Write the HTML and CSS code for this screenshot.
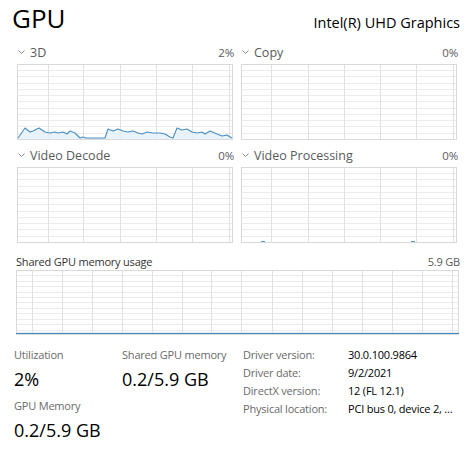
FILE: index.html
```html
<!DOCTYPE html>
<html lang="en">
<head>
<meta charset="utf-8">
<title>GPU</title>
<link rel="stylesheet" href="styles.css">
</head>
<body>
<div class="page">
  <header class="top">
    <h1 class="title">GPU</h1>
    <div class="model">Intel(R) UHD Graphics</div>
  </header>

  <div class="engines">
    <section class="engine">
      <div class="ehead">
        <span class="ename"><svg class="chev" viewBox="0 0 7 5"><polyline points="0.5,0.5 3.5,3.5 6.5,0.5"/></svg>3D</span>
        <span class="epct">2%</span>
      </div>
      <svg class="graph" viewBox="0 0 216 76" shape-rendering="crispEdges">
        <path class="hgrid" d="M1 6.5H215M1 12.5H215M1 19.5H215M1 25.5H215M1 31.5H215M1 37.5H215M1 44.5H215M1 50.5H215M1 56.5H215M1 62.5H215M1 69.5H215"/>
        <path class="vgrid" d="M31.5 1V75M66.5 1V75M103.5 1V75M139.5 1V75M175.5 1V75M212.5 1V75"/>
        <rect class="frame" x="0.5" y="0.5" width="215" height="75"/>
        <polygon class="area" shape-rendering="auto" points="1,74 8,64 13,68 16,67 22,64 28,68 33,69 38,68 41,69 46,68 50,70 53,67 58,69 61,72 63,74 66,73 69,74 88,74 91,65 96,67 101,65 106,67 111,68 116,67 121,69 125,70 130,68 136,69 143,69 148,70 153,73 156,74 160,64 165,66 170,65 175,68 180,69 185,68 188,70 193,67 200,70 205,72 210,71 213,73 215,74 215,75 1,75"/>
        <polyline class="line" shape-rendering="auto" points="1,74 8,64 13,68 16,67 22,64 28,68 33,69 38,68 41,69 46,68 50,70 53,67 58,69 61,72 63,74 66,73 69,74 88,74 91,65 96,67 101,65 106,67 111,68 116,67 121,69 125,70 130,68 136,69 143,69 148,70 153,73 156,74 160,64 165,66 170,65 175,68 180,69 185,68 188,70 193,67 200,70 205,72 210,71 213,73 215,74"/>
      </svg>
    </section>

    <section class="engine">
      <div class="ehead">
        <span class="ename"><svg class="chev" viewBox="0 0 7 5"><polyline points="0.5,0.5 3.5,3.5 6.5,0.5"/></svg>Copy</span>
        <span class="epct">0%</span>
      </div>
      <svg class="graph" viewBox="0 0 216 76" shape-rendering="crispEdges">
        <path class="hgrid" d="M1 6.5H215M1 12.5H215M1 19.5H215M1 25.5H215M1 31.5H215M1 37.5H215M1 44.5H215M1 50.5H215M1 56.5H215M1 62.5H215M1 69.5H215"/>
        <path class="vgrid" d="M30.5 1V75M67.5 1V75M103.5 1V75M139.5 1V75M175.5 1V75M212.5 1V75"/>
        <rect class="frame" x="0.5" y="0.5" width="215" height="75"/>
      </svg>
    </section>

    <section class="engine">
      <div class="ehead">
        <span class="ename"><svg class="chev" viewBox="0 0 7 5"><polyline points="0.5,0.5 3.5,3.5 6.5,0.5"/></svg>Video Decode</span>
        <span class="epct">0%</span>
      </div>
      <svg class="graph" viewBox="0 0 216 76" shape-rendering="crispEdges">
        <path class="hgrid" d="M1 6.5H215M1 12.5H215M1 19.5H215M1 25.5H215M1 31.5H215M1 37.5H215M1 44.5H215M1 50.5H215M1 56.5H215M1 62.5H215M1 69.5H215"/>
        <path class="vgrid" d="M31.5 1V75M66.5 1V75M103.5 1V75M139.5 1V75M175.5 1V75M212.5 1V75"/>
        <rect class="frame" x="0.5" y="0.5" width="215" height="75"/>
      </svg>
    </section>

    <section class="engine">
      <div class="ehead">
        <span class="ename"><svg class="chev" viewBox="0 0 7 5"><polyline points="0.5,0.5 3.5,3.5 6.5,0.5"/></svg>Video Processing</span>
        <span class="epct">0%</span>
      </div>
      <svg class="graph" viewBox="0 0 216 76" shape-rendering="crispEdges">
        <path class="hgrid" d="M1 6.5H215M1 12.5H215M1 19.5H215M1 25.5H215M1 31.5H215M1 37.5H215M1 44.5H215M1 50.5H215M1 56.5H215M1 62.5H215M1 69.5H215"/>
        <path class="vgrid" d="M30.5 1V75M67.5 1V75M103.5 1V75M139.5 1V75M175.5 1V75M212.5 1V75"/>
        <rect class="frame" x="0.5" y="0.5" width="215" height="75"/>
        <path class="blip" d="M20 74.5H24M170 74.5H174"/>
      </svg>
    </section>
  </div>

  <section class="shared">
    <div class="shead">
      <span>Shared GPU memory usage</span>
      <span class="smax">5.9 GB</span>
    </div>
    <svg class="sgraph" viewBox="0 0 443 65" shape-rendering="crispEdges">
      <path class="hgrid" d="M1 5.5H442M1 11.5H442M1 16.5H442M1 22.5H442M1 27.5H442M1 32.5H442M1 38.5H442M1 43.5H442M1 49.5H442M1 54.5H442M1 60.5H442"/>
      <path class="vgrid" d="M16.5 1V64M46.5 1V64M76.5 1V64M106.5 1V64M136.5 1V64M166.5 1V64M195.5 1V64M225.5 1V64M256.5 1V64M286.5 1V64M316.5 1V64M346.5 1V64M376.5 1V64M406.5 1V64M436.5 1V64"/>
      <rect class="frame" x="0.5" y="0.5" width="442" height="64"/>
      <rect class="sfill" x="1" y="62" width="441" height="2"/>
      <path class="sline" d="M0 63.5H443"/>
    </svg>
  </section>

  <div class="stats">
    <div class="metrics">
      <div class="metric">
        <div class="mlabel">Utilization</div>
        <div class="mvalue">2%</div>
      </div>
      <div class="metric">
        <div class="mlabel">Shared GPU memory</div>
        <div class="mvalue">0.2/5.9 GB</div>
      </div>
      <div class="metric">
        <div class="mlabel">GPU Memory</div>
        <div class="mvalue">0.2/5.9 GB</div>
      </div>
    </div>
    <dl class="info">
      <dt>Driver version:</dt><dd>30.0.100.9864</dd>
      <dt>Driver date:</dt><dd>9/2/2021</dd>
      <dt>DirectX version:</dt><dd>12 (FL 12.1)</dd>
      <dt>Physical location:</dt><dd>PCI bus 0, device 2, ...</dd>
    </dl>
  </div>
</div>
</body>
</html>
```

FILE: styles.css
```css
* { box-sizing: border-box; }

html, body {
  margin: 0;
  padding: 0;
  background: #ffffff;
}

body {
  font-family: "Open Sans", "Noto Sans", "Liberation Sans", sans-serif;
  color: #000;
  width: 473px;
  height: 450px;
  overflow: hidden;
}

.page {
  padding: 3px 14px 0 16px;
}

.top {
  display: flex;
  justify-content: space-between;
  align-items: baseline;
  margin-left: -4px;
}

.title {
  margin: 0;
  font-size: 26px;
  line-height: 30px;
  font-weight: 400;
  color: #000;
}

.model {
  font-size: 14.5px;
  color: #000;
  margin-right: -1px;
}

.engines {
  display: grid;
  grid-template-columns: 216px 216px;
  column-gap: 8px;
  row-gap: 5px;
  margin-top: 9px;
  margin-left: 1px;
}

.engine {
  display: flex;
  flex-direction: column;
  gap: 2px;
}

.ehead,
.shead {
  display: flex;
  justify-content: space-between;
  align-items: center;
  height: 20px;
  font-size: 12.5px;
  color: #5a5a5a;
}

.ename {
  display: flex;
  align-items: center;
  gap: 5px;
}

.chev {
  width: 7px;
  height: 5px;
  fill: none;
  stroke: #8a8a8a;
  stroke-width: 1;
  margin-left: 1px;
}

.epct {
  font-size: 11.5px;
  letter-spacing: -0.2px;
  margin-right: -1px;
}

.graph {
  display: block;
  width: 216px;
  height: 76px;
}

.hgrid {
  stroke: #ececec;
  stroke-width: 1;
  fill: none;
}

.vgrid {
  stroke: #e1e1e1;
  stroke-width: 1;
  fill: none;
}

.frame {
  fill: none;
  stroke: #d9d9d9;
  stroke-width: 1;
}

.area {
  fill: #e3f0f9;
  opacity: 0.8;
}

.line {
  fill: none;
  stroke: #4a8ec2;
  stroke-width: 1.1;
  stroke-linejoin: round;
}

.blip {
  stroke: #5b9bd0;
  stroke-width: 1;
  fill: none;
}

.shared {
  display: flex;
  flex-direction: column;
  gap: 1px;
  margin-top: 10px;
}

.shead {
  height: 16px;
  color: #333;
  font-size: 11px;
  letter-spacing: -0.2px;
}

.smax {
  color: #5a5a5a;
  margin-right: -1px;
}

.sgraph {
  display: block;
  width: 443px;
  height: 65px;
}

.sfill {
  fill: #dbeaf5;
}

.sline {
  stroke: #4a8ec2;
  stroke-width: 1.5;
  fill: none;
}

.stats {
  display: flex;
  align-items: flex-start;
  margin-top: 12px;
  margin-left: -2px;
}

.metrics {
  display: grid;
  grid-template-columns: 108px 121px;
  row-gap: 7px;
  width: 229px;
}

.metric {
  display: flex;
  flex-direction: column;
  gap: 4px;
}

.mlabel {
  font-size: 11px;
  letter-spacing: -0.2px;
  line-height: 16px;
  color: #6a6a6a;
}

.mvalue {
  font-size: 18px;
  line-height: 24px;
  color: #000;
}

.info {
  display: grid;
  grid-template-columns: 105px auto;
  align-content: start;
  margin: -1px 0 0 0;
  font-size: 11px;
  letter-spacing: -0.2px;
  line-height: 18px;
  white-space: nowrap;
}

.info dt {
  color: #6a6a6a;
}

.info dd {
  margin: 0;
  color: #000;
}
```
